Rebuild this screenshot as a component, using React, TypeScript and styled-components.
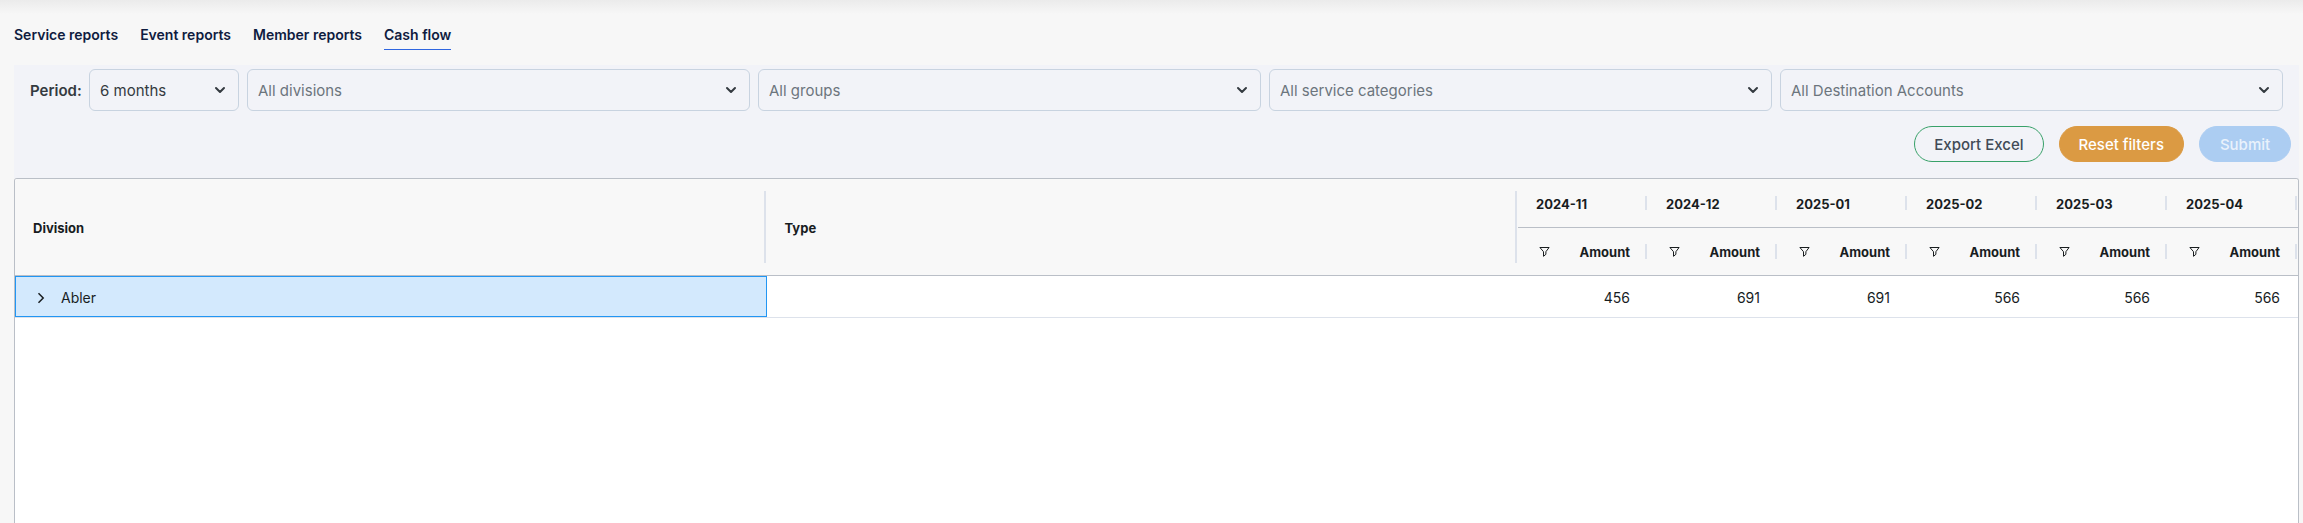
import React from "react";
import styled, { createGlobalStyle } from "styled-components";

const GlobalStyle = createGlobalStyle`
  *, *::before, *::after { box-sizing: border-box; }
  body {
    margin: 0;
    background: #f7f7f7;
    font-family: Inter, "Liberation Sans", sans-serif;
  }
`;

const Page = styled.div`
  display: flex;
  flex-direction: column;
  min-height: 100vh;
  padding: 20px 4px 0 14px;
  background: linear-gradient(#ebebeb, #f7f7f7 14px);
`;

const Tabs = styled.nav`
  display: flex;
  gap: 22px;
  height: 45px;
  align-items: flex-start;
`;

const Tab = styled.a<{ $active?: boolean }>`
  height: 30px;
  line-height: 30px;
  font-size: 14px;
  font-weight: 600;
  color: #0f1c3f;
  text-decoration: none;
  border-bottom: 1px solid ${(p) => (p.$active ? "#2f66e0" : "transparent")};
`;

const Filters = styled.form`
  display: flex;
  flex-direction: column;
  gap: 15px;
  padding: 4px 8px 16px 16px;
  background: #f2f3f8;
`;

const FilterRow = styled.div`
  display: flex;
  align-items: center;
  gap: 8px;
  padding-right: 8px;
`;

const PeriodLabel = styled.label`
  flex: 0 0 51px;
  min-width: 0;
  font-size: 15px;
  font-weight: 600;
  white-space: nowrap;
  color: #343a40;
`;

const SelectBox = styled.div<{ $fixed?: boolean }>`
  position: relative;
  flex: ${(p) => (p.$fixed ? "0 0 150px" : "1 1 0")};
  min-width: 0;

  svg {
    position: absolute;
    right: 13px;
    top: 17px;
    pointer-events: none;
  }
`;

const Select = styled.select<{ $muted?: boolean }>`
  display: block;
  appearance: none;
  width: 100%;
  height: 42px;
  padding: 0 36px 0 10px;
  border: 1px solid #c8d3e0;
  border-radius: 6px;
  background: transparent;
  font: 400 15px Inter, "Liberation Sans", sans-serif;
  color: ${(p) => (p.$muted ? "#6c757d" : "#343a40")};
`;

const Actions = styled.div`
  display: flex;
  justify-content: flex-end;
  gap: 15px;
`;

const Button = styled.button<{ $kind: "outline" | "warning" | "primary" }>`
  height: 36px;
  min-width: 92px;
  padding: 0 19px;
  border: 1px solid
    ${(p) => ({ outline: "#38a169", warning: "#db9a43", primary: "#accdf2" })[p.$kind]};
  border-radius: 18px;
  background: ${(p) => ({ outline: "transparent", warning: "#db9a43", primary: "#accdf2" })[p.$kind]};
  color: ${(p) => ({ outline: "#414b57", warning: "#ffffff", primary: "#e9f2fc" })[p.$kind]};
  font: 500 15px Inter, "Liberation Sans", sans-serif;
`;

const Grid = styled.div`
  flex: 1;
  border: 1px solid #babfc7;
  border-bottom: 0;
  border-radius: 3px 3px 0 0;
  background: #ffffff;
  overflow: hidden;
`;

const Table = styled.table`
  width: 100%;
  table-layout: fixed;
  border-collapse: separate;
  border-spacing: 0;
  color: #181d1f;
`;

const MonthCol = styled.col`
  width: 130px;
`;

const HeadCell = styled.th<{ $bar: number }>`
  height: ${(p) => (p.$bar > 20 ? 97 : p.$bar === 14 ? 49 : 48)}px;
  padding: 1px 18px 0;
  border-bottom: 1px solid #babfc7;
  background: #f8f8f8 linear-gradient(#dde2eb, #dde2eb) no-repeat right 1px center / 2px ${(p) => p.$bar}px;
  font-size: 13px;
  font-weight: 700;
  text-align: left;
`;

const HeadContent = styled.div`
  display: flex;
  align-items: center;
  justify-content: space-between;
`;

const IconButton = styled.button`
  display: flex;
  padding: 0;
  border: 0;
  background: none;
  color: #181d1f;
`;

const FilterButton = styled(IconButton)`
  margin-left: 3px;
`;

const Cell = styled.td<{ $selected?: boolean }>`
  height: 42px;
  padding: 2px 18px 0;
  border: 0 solid #dde2eb;
  border-bottom-width: 1px;
  font-size: 14px;
  text-align: right;
  ${(p) =>
    p.$selected &&
    `
    background: #d3e9fd;
    box-shadow: inset 0 0 0 1px #2196f3;
  `}
`;

const GroupValue = styled.div`
  display: flex;
  align-items: center;
  gap: 12px;
`;

const ChevronDown = () => (
  <svg width="12" height="8" viewBox="0 0 12 8" fill="none" stroke="#343a40" strokeWidth="2" strokeLinecap="round" strokeLinejoin="round" aria-hidden>
    <path d="M2 2l4 4 4-4" />
  </svg>
);

const ChevronRight = () => (
  <svg width="16" height="16" viewBox="0 0 16 16" fill="none" stroke="currentColor" strokeWidth="1.5" aria-hidden>
    <path d="M5.5 3.2L10.2 8l-4.7 4.8" />
  </svg>
);

const Funnel = () => (
  <svg width="11" height="12" viewBox="0 0 11 12" fill="none" stroke="currentColor" strokeWidth="1" aria-hidden>
    <path d="M0.9 1.5h9.2L6.9 5.7v2.6L4.5 10.3V5.7z" />
  </svg>
);

const tabs = ["Service reports", "Event reports", "Member reports", "Cash flow"];
const dropdowns = ["All divisions", "All groups", "All service categories", "All Destination Accounts"];
const months = [
  { name: "2024-11", amount: 456 },
  { name: "2024-12", amount: 691 },
  { name: "2025-01", amount: 691 },
  { name: "2025-02", amount: 566 },
  { name: "2025-03", amount: 566 },
  { name: "2025-04", amount: 566 },
];

export default function App() {
  return (
    <>
      <GlobalStyle />
      <Page>
        <Tabs>
          {tabs.map((t) => (
            <Tab key={t} href="#" $active={t === "Cash flow"}>
              {t}
            </Tab>
          ))}
        </Tabs>
        <Filters onSubmit={(e) => e.preventDefault()}>
          <FilterRow>
            <PeriodLabel htmlFor="period">Period:</PeriodLabel>
            <SelectBox $fixed>
              <Select id="period">
                <option>6 months</option>
              </Select>
              <ChevronDown />
            </SelectBox>
            {dropdowns.map((d) => (
              <SelectBox key={d}>
                <Select $muted aria-label={d}>
                  <option>{d}</option>
                </Select>
                <ChevronDown />
              </SelectBox>
            ))}
          </FilterRow>
          <Actions>
            <Button type="button" $kind="outline">Export Excel</Button>
            <Button type="reset" $kind="warning">Reset filters</Button>
            <Button type="submit" $kind="primary" disabled>Submit</Button>
          </Actions>
        </Filters>
        <Grid>
          <Table>
            <colgroup>
              <col />
              <col />
              {months.map((m) => (
                <MonthCol key={m.name} />
              ))}
            </colgroup>
            <thead>
              <tr>
                <HeadCell rowSpan={2} $bar={72}>Division</HeadCell>
                <HeadCell rowSpan={2} $bar={72}>Type</HeadCell>
                {months.map((m) => (
                  <HeadCell key={m.name} $bar={14}>{m.name}</HeadCell>
                ))}
              </tr>
              <tr>
                {months.map((m) => (
                  <HeadCell key={m.name} $bar={15}>
                    <HeadContent>
                      <FilterButton type="button" aria-label={`Filter ${m.name}`}>
                        <Funnel />
                      </FilterButton>
                      Amount
                    </HeadContent>
                  </HeadCell>
                ))}
              </tr>
            </thead>
            <tbody>
              <tr>
                <Cell $selected>
                  <GroupValue>
                    <IconButton type="button" aria-label="Expand Abler">
                      <ChevronRight />
                    </IconButton>
                    Abler
                  </GroupValue>
                </Cell>
                <Cell />
                {months.map((m) => (
                  <Cell key={m.name}>{m.amount}</Cell>
                ))}
              </tr>
            </tbody>
          </Table>
        </Grid>
      </Page>
    </>
  );
}
